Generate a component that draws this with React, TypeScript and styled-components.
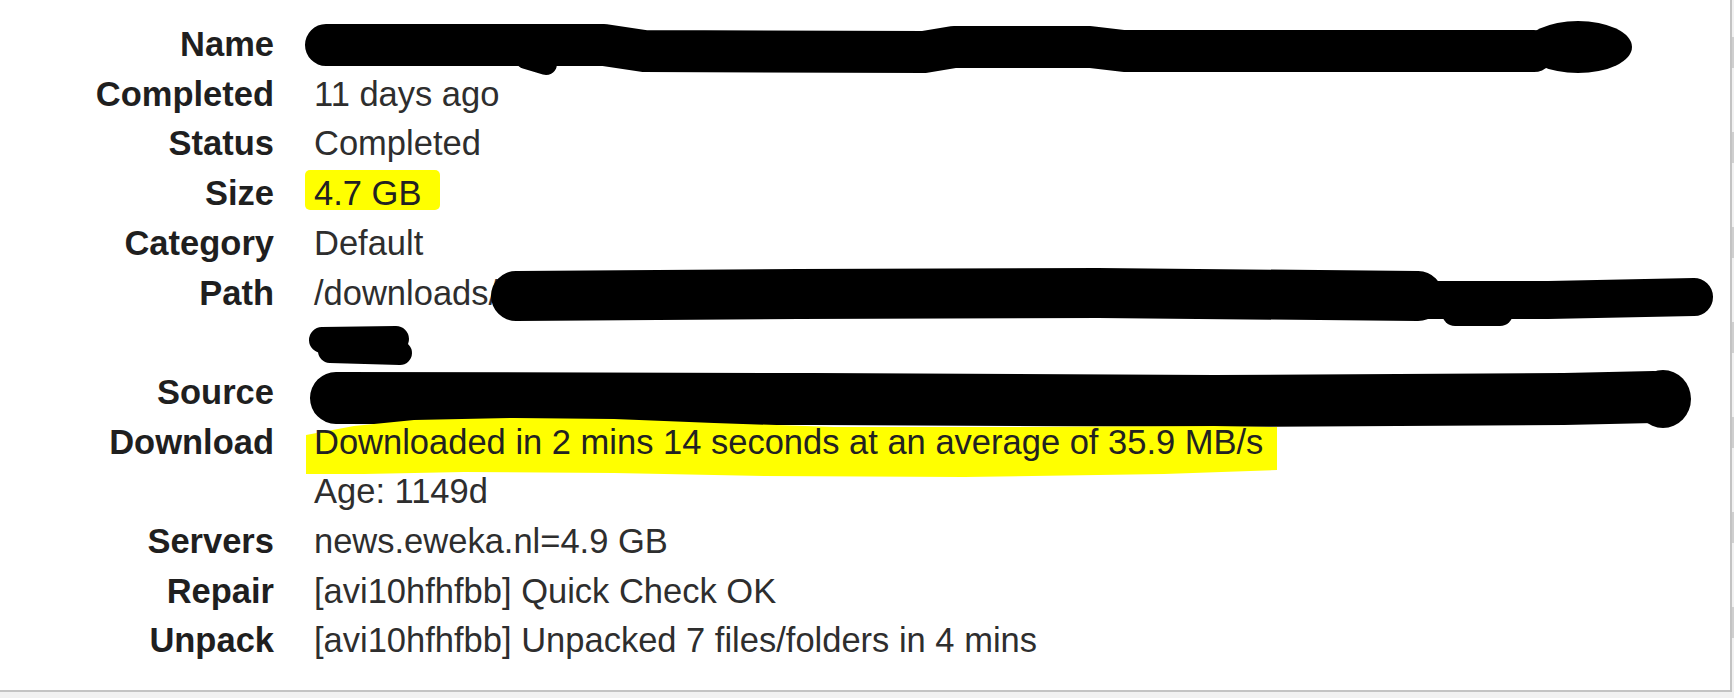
import React from 'react';
import styled, { createGlobalStyle } from 'styled-components';

const GlobalStyle = createGlobalStyle`
  html, body {
    margin: 0;
    padding: 0;
    background: #f1f1f1;
  }
  body {
    font-family: 'Liberation Sans', Arial, sans-serif;
  }
`;

const Screen = styled.div`
  display: flex;
  align-items: flex-start;
  height: 698px;
  overflow: hidden;
`;

const Panel = styled.section`
  width: 1732px;
  height: 692px;
  box-sizing: border-box;
  padding-top: 20px;
  background: #fff;
  border-right: 2px solid #c3c3c3;
  border-bottom: 2px solid #c3c3c3;
  overflow: hidden;
`;

const Edge = styled.div`
  flex: 1;
  height: 692px;
  background: repeating-linear-gradient(
    to bottom,
    transparent 0 37px,
    #cfcfcf 37px 68px,
    transparent 68px 95px
  );
`;

const Details = styled.dl`
  display: grid;
  grid-template-columns: 274px 1fr;
  column-gap: 40px;
  margin: 0;
  font-size: 34.5px;
  line-height: 49.7px;
`;

const Label = styled.dt`
  margin: 0;
  text-align: right;
  font-weight: bold;
  color: #1f1f1f;
`;

const Value = styled.dd`
  margin: 0;
  color: #2e2e2e;
  white-space: nowrap;
  display: flex;
  flex-direction: column;
`;

const Line = styled.div`
  display: flex;
  align-items: center;
  height: 49.7px;
`;

const Scribble = styled.svg`
  display: block;
  flex: none;
  overflow: visible;
  align-self: flex-start;
`;

const Marker = styled.span<{ $box?: boolean }>`
  position: relative;
  z-index: 0;
  display: inline-block;
  color: #222;

  ${(p) =>
    p.$box &&
    `
    &::before {
      content: '';
      position: absolute;
      z-index: -1;
      left: -9px;
      right: -19px;
      top: 1px;
      bottom: 9px;
      background: #ffff00;
      border-radius: 5px;
    }
  `}
`;

const MarkerStroke = styled.svg`
  position: absolute;
  z-index: -1;
  left: -8px;
  top: -8px;
  overflow: visible;
`;

const ink = { stroke: '#000', fill: 'none', strokeLinecap: 'round', strokeLinejoin: 'round' } as const;

const NameRedaction = () => (
  <Scribble width={1330} height={50}>
    <path {...ink} strokeWidth={42} d="M 12 25 L 290 25 L 330 31 L 610 32 L 640 27 L 776 27 L 810 31 L 1220 31" />
    <path {...ink} strokeWidth={22} d="M 212 38 L 232 44" />
    <ellipse cx={1264} cy={27} rx={54} ry={26} fill="#000" />
  </Scribble>
);

const PathRedaction = () => (
  <Scribble width={1215} height={50}>
    <path {...ink} strokeWidth={50} d="M 18 27 L 300 25 L 600 24 L 920 27" />
    <path {...ink} strokeWidth={38} d="M 900 31 L 1050 31 L 1196 28" />
    <path {...ink} strokeWidth={26} d="M 957 44 L 1002 44" />
  </Scribble>
);

const PathTailRedaction = () => (
  <Scribble width={100} height={50}>
    <path {...ink} strokeWidth={26} d="M 8 22 L 82 21" />
    <path {...ink} strokeWidth={24} d="M 16 33 L 86 35" />
  </Scribble>
);

const SourceRedaction = () => (
  <Scribble width={1380} height={50}>
    <path {...ink} strokeWidth={52} d="M 22 30 L 500 31 L 900 33 L 1250 31 L 1340 29" />
    <ellipse cx={1349} cy={31} rx={28} ry={29} fill="#000" />
  </Scribble>
);

const DownloadMarker = () => (
  <MarkerStroke width={975} height={72}>
    <path
      fill="#ffff00"
      d="M 0 25 L 48 16 L 108 10 L 208 8 L 308 9 L 408 13 L 528 17 L 708 17 L 908 16 L 971 17
         L 971 60 L 858 64 L 658 67 L 458 66 L 308 63 L 158 62 L 58 64 L 0 64 Z"
    />
  </MarkerStroke>
);

export default function App() {
  return (
    <>
      <GlobalStyle />
      <Screen>
        <Panel>
          <Details>
            <Label>Name</Label>
            <Value>
              <Line>
                <NameRedaction />
              </Line>
            </Value>

            <Label>Completed</Label>
            <Value>11 days ago</Value>

            <Label>Status</Label>
            <Value>Completed</Value>

            <Label>Size</Label>
            <Value>
              <Line>
                <Marker $box>4.7 GB</Marker>
              </Line>
            </Value>

            <Label>Category</Label>
            <Value>Default</Value>

            <Label>Path</Label>
            <Value>
              <Line>
                <span>/downloads/</span>
                <PathRedaction />
              </Line>
              <Line>
                <PathTailRedaction />
              </Line>
            </Value>

            <Label>Source</Label>
            <Value>
              <Line>
                <SourceRedaction />
              </Line>
            </Value>

            <Label>Download</Label>
            <Value>
              <Line>
                <Marker>
                  <DownloadMarker />
                  Downloaded in 2 mins 14 seconds at an average of 35.9 MB/s
                </Marker>
              </Line>
              <Line>Age: 1149d</Line>
            </Value>

            <Label>Servers</Label>
            <Value>news.eweka.nl=4.9 GB</Value>

            <Label>Repair</Label>
            <Value>[avi10hfhfbb] Quick Check OK</Value>

            <Label>Unpack</Label>
            <Value>[avi10hfhfbb] Unpacked 7 files/folders in 4 mins</Value>
          </Details>
        </Panel>
        <Edge />
      </Screen>
    </>
  );
}
